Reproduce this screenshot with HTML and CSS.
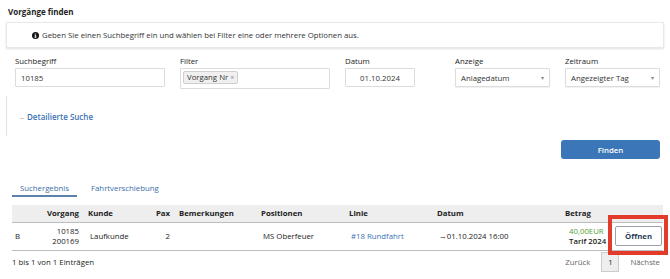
FILE: index.html
```html
<!DOCTYPE html>
<html lang="de">
<head>
<meta charset="utf-8">
<link rel="stylesheet" href="styles.css">
</head>
<body>
<div class="page">
  <h1 class="title">Vorgänge finden</h1>
  <div class="info">
    <span class="info-icon">i</span>
    <span>Geben Sie einen Suchbegriff ein und wählen bei Filter eine oder mehrere Optionen aus.</span>
  </div>
  <div class="form">
    <div class="field">
      <label>Suchbegriff</label>
      <div class="input w150">10185</div>
    </div>
    <div class="field">
      <label>Filter</label>
      <div class="input multi w150"><span class="tag">Vorgang Nr <span class="x">×</span></span></div>
    </div>
    <div class="field">
      <label>Datum</label>
      <div class="input center w70">01.10.2024</div>
    </div>
    <div class="field">
      <label>Anzeige</label>
      <div class="input select w95">Anlagedatum<span class="caret">▾</span></div>
    </div>
    <div class="field">
      <label>Zeitraum</label>
      <div class="input select w95">Angezeigter Tag<span class="caret">▾</span></div>
    </div>
  </div>
  <div class="detail"><span class="dash">–</span> Detailierte Suche</div>
  <div class="actions"><button class="btn-primary">Finden</button></div>
  <div class="tabs">
    <span class="tab active">Suchergebnis</span>
    <span class="tab">Fahrtverschiebung</span>
  </div>
  <div class="results">
    <table class="grid">
      <colgroup>
        <col class="c1"><col class="c2"><col class="c3"><col class="c4"><col class="c5">
        <col class="c6"><col class="c7"><col class="c8"><col class="c9"><col class="c10">
      </colgroup>
      <thead>
        <tr>
          <th></th><th class="r">Vorgang</th><th>Kunde</th><th class="r">Pax</th><th>Bemerkungen</th>
          <th>Positionen</th><th>Linie</th><th>Datum</th><th>Betrag</th><th></th>
        </tr>
      </thead>
      <tbody>
        <tr>
          <td>B</td>
          <td class="r">10185<br>200169</td>
          <td class="pl">Laufkunde</td>
          <td class="r">2</td>
          <td></td>
          <td class="pl">MS Oberfeuer</td>
          <td class="pl link">#18 Rundfahrt</td>
          <td class="pl">→01.10.2024 16:00</td>
          <td class="amount"><span class="green">40,00EUR</span><br><span class="tarif">Tarif 2024</span></td>
          <td class="action"><button class="btn-open">Öffnen</button></td>
        </tr>
      </tbody>
    </table>
    <div class="highlight"></div>
  </div>
  <div class="footer">
    <span>1 bis 1 von 1 Einträgen</span>
    <div class="pager">
      <span class="pg-text">Zurück</span>
      <span class="pg-num">1</span>
      <span class="pg-text">Nächste</span>
    </div>
  </div>
</div>
</body>
</html>
```

FILE: styles.css
```css
* { box-sizing: border-box; }
html, body { margin: 0; padding: 0; background: #fff; }
body {
  font-family: "Open Sans", "Noto Sans", sans-serif;
  font-size: 7.8px;
  color: #222;
  width: 670px;
  height: 279px;
  overflow: hidden;
}
.page { padding: 0 6px; position: relative; }
.title {
  margin: 0;
  padding: 6px 2px 0;
  height: 22px;
  font-size: 8px;
  font-weight: 700;
  color: #222;
}
.info {
  height: 26px;
  border: 1px solid #e8e8e8;
  box-shadow: 0 1px 2px rgba(0,0,0,0.12);
  display: flex;
  align-items: center;
  padding-left: 25px;
  gap: 3px;
  color: #333;
}
.info-icon {
  width: 7px; height: 7px;
  border-radius: 50%;
  background: #111;
  color: #fff;
  font-size: 6px;
  font-weight: 700;
  line-height: 7px;
  text-align: center;
  font-family: "DejaVu Serif", serif;
}
.form {
  display: grid;
  grid-template-columns: 165px 165px 110px 110px 95px;
  padding: 9px 0 0 9px;
}
.field label { display: block; height: 11px; line-height: 8px; color: #222; }
.input {
  height: 19px;
  border: 1px solid #dcdcdc;
  border-radius: 1px;
  display: flex;
  align-items: center;
  padding: 0 5px;
  color: #333;
  background: #fff;
}
.w150 { width: 150px; }
.w70 { width: 70px; }
.w95 { width: 95px; }
.center { justify-content: center; }
.multi { height: 21px; align-items: flex-start; padding: 2px 2px; }
.tag {
  background: #f0f0f0;
  border: 1px solid #cfcfcf;
  border-radius: 2px;
  padding: 0 3px;
  line-height: 10px;
  color: #333;
}
.tag .x { color: #888; font-size: 7px; }
.select { justify-content: space-between; box-shadow: 0 1px 1px rgba(0,0,0,0.06); }
.caret { color: #888; font-size: 6px; }
.detail {
  margin-top: 7px;
  border-left: 1px solid #e2e2e2;
  height: 40px;
  padding-left: 13px;
  display: flex;
  align-items: center;
  color: #3d74b6;
  font-weight: 600;
  font-size: 8px;
}
.dash { color: #999; margin-right: 3px; font-weight: 400; }
.actions { display: flex; justify-content: flex-end; padding-right: 4px; margin-top: 4px; }
.btn-primary {
  width: 99px; height: 19px;
  background: #3a76b8;
  border: none;
  border-radius: 3px;
  color: #fff;
  font-family: inherit;
  font-size: 7.8px;
  font-weight: 600;
}
.tabs {
  display: flex;
  margin-top: 22px;
  padding-left: 6px;
  height: 16px;
}
.tab { color: #3d6ea8; padding: 0 8px; line-height: 14px; margin-right: 6px; }
.tab.active { border-bottom: 2px solid #5b82ad; }
.results { position: relative; margin-top: 8px; padding-left: 6px; }
.grid {
  table-layout: fixed;
  border-collapse: collapse;
  width: 651px;
}
.c1 { width: 28px; } .c2 { width: 44px; } .c3 { width: 58px; } .c4 { width: 33px; }
.c5 { width: 82px; } .c6 { width: 88px; } .c7 { width: 88px; } .c8 { width: 128px; }
.c9 { width: 49px; } .c10 { width: 53px; }
.grid th {
  background: #eeeeee;
  height: 17px;
  text-align: left;
  font-weight: 700;
  padding: 0 4px;
  border-bottom: 1px solid #bdbdbd;
  white-space: nowrap;
}
.grid td {
  height: 28px;
  padding: 0 4px 0 3px;
  border-bottom: 1px solid #bdbdbd;
  line-height: 10px;
  white-space: nowrap;
  vertical-align: middle;
}
.grid .r { text-align: right; padding-right: 5px; }
.grid td.pl { padding-left: 6px; }
.grid td.action { padding: 0 0 0 5px; }
.link { color: #3d74b6; }
.grid td.amount { padding-left: 8px; }
.green { color: #55a23a; }
.tarif { color: #222; font-weight: 600; }
.btn-open {
  width: 47px; height: 20px;
  padding: 0;
  background: #fff;
  border: 1px solid #9aa3ad;
  border-radius: 2px;
  font-family: inherit;
  font-size: 7.8px;
  font-weight: 700;
  color: #2a3f5a;
  display: block;
}
.highlight {
  position: absolute;
  left: 602px;
  top: 10px;
  width: 60px;
  height: 40px;
  border: 4px solid #e23b2b;
}
.footer {
  display: flex;
  justify-content: space-between;
  align-items: center;
  padding: 1px 0 0 6px;
  height: 21px;
}
.pager { display: flex; align-items: center; gap: 11px; padding-right: 4px; }
.pg-text { color: #666; }
.pg-num {
  width: 18px; height: 20px;
  background: #eee;
  border: 1px solid #ccc;
  display: flex; align-items: center; justify-content: center;
  color: #222;
}
```
